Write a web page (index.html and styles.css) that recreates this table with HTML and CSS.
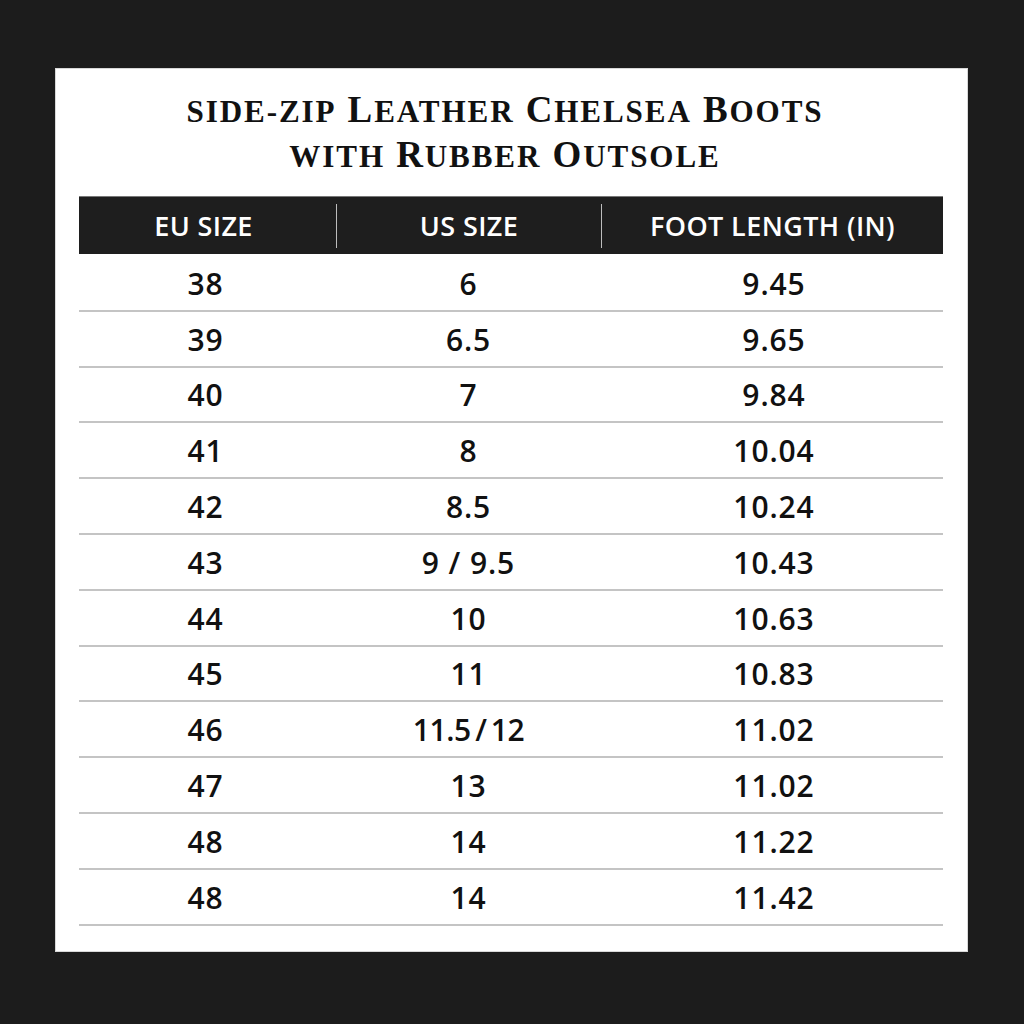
FILE: index.html
```html
<!DOCTYPE html>
<html>
<head>
<meta charset="utf-8">
<link rel="stylesheet" href="styles.css">
</head>
<body>
<div class="card">
  <h1 class="title">
    <span class="line"><span class="sc">SIDE-ZIP</span> L<span class="sc">EATHER</span> C<span class="sc">HELSEA</span> B<span class="sc">OOTS</span></span>
    <span class="line"><span class="sc">WITH</span> R<span class="sc">UBBER</span> O<span class="sc">UTSOLE</span></span>
  </h1>
  <div class="table">
    <div class="head">
      <div class="hc c1">EU SIZE</div>
      <div class="hc c2">US SIZE</div>
      <div class="hc c3">FOOT LENGTH (IN)</div>
    </div>
    <div class="row"><div class="c1">38</div><div class="c2">6</div><div class="c3">9.45</div></div>
    <div class="row"><div class="c1">39</div><div class="c2">6.5</div><div class="c3">9.65</div></div>
    <div class="row"><div class="c1">40</div><div class="c2">7</div><div class="c3">9.84</div></div>
    <div class="row"><div class="c1">41</div><div class="c2">8</div><div class="c3">10.04</div></div>
    <div class="row"><div class="c1">42</div><div class="c2">8.5</div><div class="c3">10.24</div></div>
    <div class="row"><div class="c1">43</div><div class="c2">9 / 9.5</div><div class="c3">10.43</div></div>
    <div class="row"><div class="c1">44</div><div class="c2">10</div><div class="c3">10.63</div></div>
    <div class="row"><div class="c1">45</div><div class="c2">11</div><div class="c3">10.83</div></div>
    <div class="row"><div class="c1">46</div><div class="c2 tight">11.5 / 12</div><div class="c3">11.02</div></div>
    <div class="row"><div class="c1">47</div><div class="c2">13</div><div class="c3">11.02</div></div>
    <div class="row"><div class="c1">48</div><div class="c2">14</div><div class="c3">11.22</div></div>
    <div class="row"><div class="c1">48</div><div class="c2">14</div><div class="c3">11.42</div></div>
  </div>
</div>
</body>
</html>
```
FILE: styles.css
```css
html, body {
  margin: 0;
  padding: 0;
}
body {
  background: #1c1c1c;
  width: 1024px;
  height: 1024px;
  padding: 68px 56px 0 55px;
  box-sizing: border-box;
}
.card {
  background: #ffffff;
  height: 884px;
  box-sizing: border-box;
  padding: 0 24px 0 23px;
  border: 1px solid #d8d8d8;
}
.title {
  margin: 0;
  padding-top: 19px;
  height: 127px;
  box-sizing: border-box;
  font-family: "Liberation Serif", "Times New Roman", serif;
  font-weight: bold;
  font-size: 37px;
  line-height: 43px;
  color: #111;
  text-align: center;
  letter-spacing: 1.9px;
}
.title .line {
  display: block;
  padding-right: 12px;
}
.title .sc {
  font-size: 0.84em;
}
.table {
  font-family: "Open Sans", "Noto Sans", sans-serif;
}
.head {
  display: grid;
  grid-template-columns: 257px 265px 1fr;
  height: 58px;
  margin-bottom: 2px;
  background: #1e1e1e;
  align-items: center;
  color: #fff;
  font-weight: 600;
  font-size: 27px;
  letter-spacing: 0.4px;
  border-top: 1px solid #777;
  box-sizing: border-box;
}
.hc {
  text-align: center;
  height: 44px;
  line-height: 44px;
}
.hc.c1 { padding-right: 8px; }
.hc.c2, .hc.c3 {
  border-left: 1px solid #bdbdbd;
}
.row {
  display: grid;
  grid-template-columns: 257px 265px 1fr;
  height: 55.8px;
  align-items: center;
  border-bottom: 2px solid #c4c4c4;
  box-sizing: border-box;
  font-size: 30px;
  font-weight: 600;
  letter-spacing: 0.9px;
  color: #111;
}
.row > div {
  text-align: center;
  padding-top: 1px;
}
.row .c1 { padding-right: 4px; }
.row .c3 { padding-left: 4px; }
.row .tight { letter-spacing: -0.4px; word-spacing: -3px; }
```
